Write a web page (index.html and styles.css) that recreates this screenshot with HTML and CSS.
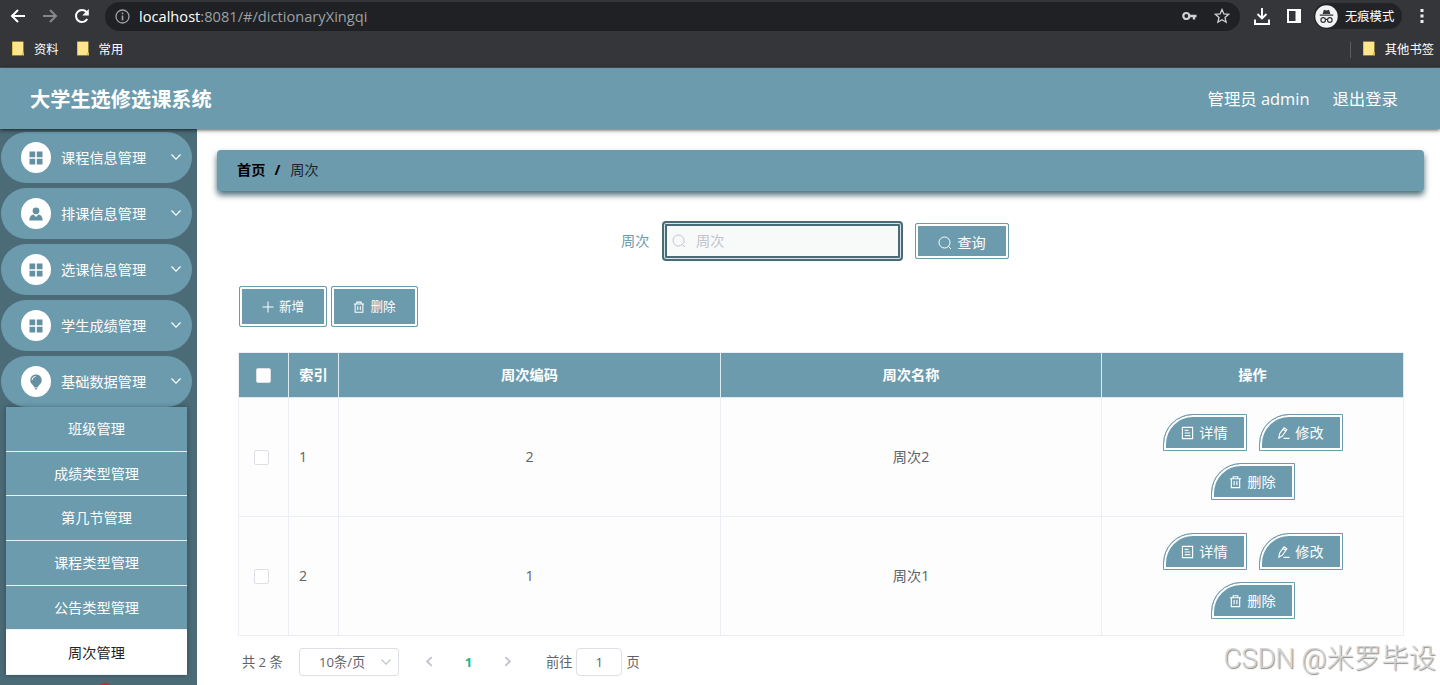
FILE: index.html
```html
<!DOCTYPE html>
<html lang="zh-CN">
<head>
<meta charset="utf-8">
<title>大学生选修选课系统</title>
<link rel="stylesheet" href="styles.css">
</head>
<body>
<svg class="defs" width="0" height="0">
  <symbol id="grid" viewBox="0 0 14 14"><path fill="currentColor" d="M.5.5h5.7v5.7H.5zM7.8.5h5.7v5.7H7.8zM.5 7.8h5.7v5.7H.5zM7.8 7.8h5.7v5.7H7.8z"/></symbol>
  <symbol id="user" viewBox="0 0 14 14"><circle cx="7" cy="3.8" r="3.4" fill="currentColor"/><path fill="currentColor" d="M.3 13.5c0-3.5 1.700-5.500 4.200-5.900L7 10l2.500-2.400c2.500.4 4.200 2.400 4.200 5.900z"/></symbol>
  <symbol id="bulb" viewBox="0 0 14 16"><path fill="currentColor" d="M7 .5a5.700 5.700 0 0 0-3.200 10.400L5.500 13.500h3l1.700-2.600A5.700 5.700 0 0 0 7 .5zM5.600 14.200h2.800L7.700 15.500H6.300z"/><path d="M3 6.200A4 4 0 0 1 6.600 2.400" fill="none" stroke="#fff"/></symbol>
  <symbol id="down" viewBox="0 0 12 12"><path d="M1.500 3.500 6 8.200l4.500-4.700" fill="none" stroke="currentColor" stroke-width="1.200"/></symbol>
  <symbol id="pager" viewBox="0 0 12 12"><path d="M2 4 6 8.200 10 4" fill="none" stroke="currentColor" stroke-width="1.700"/></symbol>
  <symbol id="search" viewBox="0 0 14 14"><circle cx="6.500" cy="6.500" r="5.500" fill="none" stroke="currentColor"/><path d="m10.500 10.500 2.500 2.500" stroke="currentColor"/></symbol>
  <symbol id="plus" viewBox="0 0 12 12"><path d="M6 .5v11M.5 6h11" stroke="currentColor"/></symbol>
  <symbol id="trash" viewBox="0 0 14 14"><path d="M1 3.500h12M2.500 3.500v9.500h9V3.500M4.500 3.500V1.300h5v2.200M5.500 6v4.500M8.500 6v4.500" fill="none" stroke="currentColor" stroke-width="1.200"/></symbol>
  <symbol id="doc" viewBox="0 0 14 14"><path d="M1.500 1h11v12h-11zM4 4.200h4M4 7h6M4 9.800h6" fill="none" stroke="currentColor" stroke-width="1.200"/></symbol>
  <symbol id="edit" viewBox="0 0 14 14"><path d="m2.800 8 4.800-6.600 3 2.100-4.800 6.700L2 12.500zM6.500 3l3 2.100M7 12.800h6.500" fill="none" stroke="currentColor" stroke-width="1.200"/></symbol>
  <symbol id="folder" viewBox="0 0 12 15"><path d="M0 .5h11.500V11l.5 1v2.500H0z" fill="#e2bd48"/><path d="M1 1h10v9.500L9.500 14H1z" fill="#ffe58c"/></symbol>
</svg>

<div class="toolbar">
  <svg class="nav-icon" viewBox="0 0 16 16"><path d="M15 8H2M8 2 2 8l6 6" fill="none" stroke="#fff" stroke-width="2"/></svg>
  <svg class="nav-icon" viewBox="0 0 16 16"><path d="M1 8h13M8 2l6 6-6 6" fill="none" stroke="#86878a" stroke-width="2"/></svg>
  <svg class="nav-icon" viewBox="0 0 16 16"><path d="M13.200 11A6 6 0 1 1 12.500 4" fill="none" stroke="#fff" stroke-width="2"/><path d="M14.800 1v6.500H8.300z" fill="#fff"/></svg>
  <div class="address">
    <svg width="15" height="15" viewBox="0 0 15 15"><circle cx="7.500" cy="7.500" r="6.500" fill="none" stroke="#a0a2a6" stroke-width="1.300"/><path d="M7.500 6.500v5M7.500 3.500v1.700" stroke="#a0a2a6" stroke-width="1.600"/></svg>
    <span class="url"><b>localhost</b>:8081/#/dictionaryXingqi</span>
    <svg class="key" width="15" height="10" viewBox="0 0 15 10"><circle cx="4.300" cy="5" r="3" fill="none" stroke="#d0d1d4" stroke-width="2.200"/><path d="M7 5h7.500M12 5v3.500" stroke="#d0d1d4" stroke-width="2.400"/></svg>
    <svg width="16" height="16" viewBox="0 0 16 16"><path d="m8 1.500 1.900 4.400 4.700.4L11 9.500l1.100 4.700L8 11.700l-4.100 2.500L5 9.500 1.400 6.300l4.700-.4z" fill="none" stroke="#cfd0d3" stroke-width="1.300"/></svg>
  </div>
  <svg class="download" width="16" height="17" viewBox="0 0 16 17"><path d="M8 0v10M3.500 6 8 10.500 12.500 6M1 11.500V16h14v-4.500" fill="none" stroke="#fff" stroke-width="1.900"/></svg>
  <svg class="panel" width="14" height="14" viewBox="0 0 14 14"><path d="M1 1h12v12H1z" fill="none" stroke="#fff" stroke-width="2"/><path d="M8.500 1H13v12H8.500z" fill="#fff"/></svg>
  <div class="incognito">
    <svg width="23" height="23" viewBox="0 0 23 23"><circle cx="11.500" cy="11.500" r="11.200" fill="#f3f3f4"/><path d="m7.600 9 1.300-4.200 2.600.6 2.600-.6L15.400 9zM4.800 9.500h13.400v1.300H4.800z" fill="#35363a"/><g fill="none" stroke="#35363a" stroke-width="1.200"><circle cx="8.200" cy="15" r="2.300"/><circle cx="14.800" cy="15" r="2.300"/><path d="M10.500 14.600q1-.6 2 0"/></g></svg>
    <span>无痕模式</span>
  </div>
  <svg class="dots" width="4" height="14" viewBox="0 0 4 14"><path d="M.5 0h3v3h-3zM.5 5.500h3v3h-3zM.5 11h3v3h-3z" fill="#eee"/></svg>
</div>
<div class="bookmarks">
  <span class="bookmark"><svg><use href="#folder"/></svg>资料</span>
  <span class="bookmark"><svg><use href="#folder"/></svg>常用</span>
  <span class="bookmark others"><svg><use href="#folder"/></svg>其他书签</span>
</div>

<header class="header">
  <h1>大学生选修选课系统</h1>
  <span>管理员 admin</span>
  <span>退出登录</span>
</header>

<div class="body">
  <nav class="sidebar">
    <div class="menu-item"><i><svg><use href="#grid"/></svg></i><span>课程信息管理</span><svg class="arrow"><use href="#down"/></svg></div>
    <div class="menu-item"><i><svg><use href="#user"/></svg></i><span>排课信息管理</span><svg class="arrow"><use href="#down"/></svg></div>
    <div class="menu-item"><i><svg><use href="#grid"/></svg></i><span>选课信息管理</span><svg class="arrow"><use href="#down"/></svg></div>
    <div class="menu-item"><i><svg><use href="#grid"/></svg></i><span>学生成绩管理</span><svg class="arrow"><use href="#down"/></svg></div>
    <div class="menu-item"><i><svg class="bulb"><use href="#bulb"/></svg></i><span>基础数据管理</span><svg class="arrow"><use href="#down"/></svg></div>
    <div class="submenu">
      <a>班级管理</a>
      <a>成绩类型管理</a>
      <a>第几节管理</a>
      <a>课程类型管理</a>
      <a>公告类型管理</a>
      <a class="active">周次管理</a>
    </div>
    <div class="record"></div>
  </nav>

  <main class="main">
    <div class="breadcrumb"><b>首页</b><b class="slash">/</b><span>周次</span></div>
    <div class="search">
      <label>周次</label>
      <div class="input"><svg><use href="#search"/></svg><span>周次</span></div>
      <button class="btn query"><svg><use href="#search"/></svg>查询</button>
    </div>
    <div class="actions">
      <button class="btn add"><svg><use href="#plus"/></svg>新增</button>
      <button class="btn"><svg><use href="#trash"/></svg>删除</button>
    </div>
    <div class="table">
      <div class="row head">
        <div><i class="check"></i></div><div>索引</div><div>周次编码</div><div>周次名称</div><div>操作</div>
      </div>
      <div class="row">
        <div><i class="check"></i></div><div class="index">1</div><div>2</div><div>周次2</div>
        <div class="ops">
          <button class="btn leaf"><svg><use href="#doc"/></svg>详情</button>
          <button class="btn leaf"><svg><use href="#edit"/></svg>修改</button>
          <button class="btn leaf"><svg><use href="#trash"/></svg>删除</button>
        </div>
      </div>
      <div class="row">
        <div><i class="check"></i></div><div class="index">2</div><div>1</div><div>周次1</div>
        <div class="ops">
          <button class="btn leaf"><svg><use href="#doc"/></svg>详情</button>
          <button class="btn leaf"><svg><use href="#edit"/></svg>修改</button>
          <button class="btn leaf"><svg><use href="#trash"/></svg>删除</button>
        </div>
      </div>
    </div>
    <div class="pagination">
      <span class="total">共 2 条</span>
      <span class="size">10条/页<svg><use href="#down"/></svg></span>
      <svg class="prev"><use href="#pager"/></svg>
      <b>1</b>
      <svg class="next"><use href="#pager"/></svg>
      <span class="goto">前往</span><span class="jump">1</span><span>页</span>
    </div>
  </main>
</div>
<div class="watermark">CSDN @米罗毕设</div>
</body>
</html>
```

FILE: styles.css
```css
* { box-sizing: border-box; }
body {
  margin: 0;
  height: 685px;
  overflow: hidden;
  display: flex;
  flex-direction: column;
  position: relative;
  background: #fff;
  font: 14.2px/20px "Open Sans", "Noto Sans CJK SC", sans-serif;
  color: #606266;
}
svg { display: block; flex: none; }
.defs { position: absolute; }

/* browser chrome */
.toolbar {
  flex: none;
  height: 32px;
  background: #35363a;
  display: flex;
  align-items: center;
  padding: 0 16px 0 10px;
}
.nav-icon { width: 16px; height: 16px; margin-right: 16px; }
.address {
  width: 1135px;
  height: 29px;
  margin: 0 14px 0 -1px;
  border-radius: 15px;
  background: #202124;
  display: flex;
  align-items: center;
  padding: 0 10px 0 10px;
}
.url { margin-left: 9px; flex: 1; color: #9aa0a6; font-size: 14.65px; }
.url b { font-weight: 400; color: #fff; }
.key { margin-right: 17px; }
.panel { margin: 0 13px 0 17px; }
.incognito {
  width: 88px;
  height: 26px;
  border-radius: 13px;
  background: #222327;
  display: flex;
  align-items: center;
  gap: 7px;
  padding-left: 1px;
  color: #fff;
  font-size: 12.3px;
  white-space: nowrap;
}
.incognito span { padding-top: 1px; }
.dots { margin-left: auto; }
.bookmarks {
  flex: none;
  height: 36px;
  background: #35363a;
  border-bottom: 1px solid #4a5458;
  display: flex;
  gap: 18px;
  padding: 0 6px 0 12px;
  color: #fff;
  font-size: 12.3px;
}
.bookmark { display: flex; align-items: center; gap: 10px; height: 35px; }
.bookmark svg { width: 12px; height: 15px; margin-top: -2px; }
.others { margin-left: auto; }
.others::before { content: ""; width: 1px; height: 16px; background: #5b5c60; margin-right: 2px; }

/* app header */
.header {
  flex: none;
  height: 61px;
  background: #6c9bae;
  display: flex;
  align-items: center;
  padding: 0 42px 0 30px;
  gap: 23px;
  color: #fff;
  font-size: 16.4px;
  position: relative;
  box-shadow: 0 1px 4px rgba(0, 0, 0, .7);
}
.header h1 { margin: 0 auto 0 0; font-size: 20.2px; font-weight: 700; }

.body { flex: 1; min-height: 0; display: flex; }

/* sidebar */
.sidebar {
  width: 197px;
  flex: none;
  background: #4b6b76;
  padding: 3px 5px 0 1px;
  overflow: hidden;
}
.menu-item {
  height: 51px;
  margin-bottom: 5px;
  border-radius: 26px;
  background: #6c9bae;
  color: #fff;
  display: flex;
  align-items: center;
  padding: 0 10px 0 20px;
}
.menu-item i {
  width: 30px;
  height: 31px;
  margin-right: 10px;
  border-radius: 50%;
  background: #fff;
  color: #6590a2;
  display: flex;
  align-items: center;
  justify-content: center;
}
.menu-item i svg { width: 14px; height: 14px; }
.menu-item i .bulb { height: 16px; }
.menu-item .arrow { width: 12px; height: 12px; margin: -1px 0 0 auto; }
.submenu {
  width: 181px;
  margin: -5px 0 0 5px;
  position: relative;
  box-shadow: 0 0 5px rgba(0, 0, 0, .3);
}
.submenu a {
  display: block;
  height: 44.7px;
  line-height: 44px;
  text-align: center;
  color: #fff;
  background: #6c9bae;
  border-bottom: 1px solid #e9f3f6;
}
.submenu .active { background: #fff; color: #222; line-height: 46px; }
.record { width: 16px; height: 16px; margin: 8px 0 0 96px; border-radius: 50%; background: #b92f36; }

/* content */
.main { flex: 1; padding: 21px 16px 0 20px; }
.breadcrumb {
  height: 41px;
  border-radius: 4px;
  background: #6c9bae;
  box-shadow: 0 4px 6px #4b6b76;
  display: flex;
  align-items: center;
  padding: 0 0 2px 20px;
  color: #222;
}
.breadcrumb b { color: #000; }
.breadcrumb .slash { margin: 0 10px 0 9px; }
.search {
  height: 40px;
  margin: 30px 0 0 404px;
  display: flex;
  align-items: center;
}
.search label { width: 41px; color: #6c9bae; }
.input {
  width: 241px;
  height: 40px;
  border: 2px solid #4b6b76;
  border-radius: 4px;
  background: #f8f9f9;
  box-shadow: inset 0 0 0 1px #d7e5ea, inset 0 0 0 3px #4b6b76;
  display: flex;
  align-items: center;
  gap: 10px;
  padding-left: 8px;
  color: #c0c4cc;
}
.input svg { width: 14px; height: 14px; }
.btn {
  margin: 0;
  border: 1px solid #6c9bae;
  border-radius: 2px;
  box-shadow: inset 0 0 0 2px #fff;
  background: #6c9bae;
  color: #fff;
  font: inherit;
  font-size: 12.6px;
  width: 87px;
  height: 41px;
  display: flex;
  align-items: center;
  justify-content: center;
  gap: 5px;
  padding: 0;
}
.btn svg { width: 12px; height: 12px; }
.add { width: 88px; }
.query { width: 94px; height: 36px; margin-left: 12px; font-size: 14.2px; padding: 4px 0 0 0; }
.query svg { width: 14px; height: 14px; }
.actions { display: flex; gap: 4px; margin: 25px 0 0 22px; }

.table {
  width: 1166px;
  margin: 25px 0 0 21px;
  border: 1px solid #ebeef5;
  border-width: 1px 0 0 1px;
}
.row {
  display: grid;
  grid-template-columns: 50px 50px 382px 381px 302px;
  height: 119px;
  background: #fdfdfe;
}
.row > div {
  border: 1px solid #ebeef5;
  border-width: 0 1px 1px 0;
  display: flex;
  align-items: center;
  justify-content: center;
}
.row .index { justify-content: flex-start; padding-left: 10px; }
.row.head { height: 45px; background: #6c9bae; color: #fff; font-weight: 700; }
.head > div { border-color: #dcebf1; }
.check {
  width: 15px;
  height: 15px;
  border: 1px solid #dcdfe6;
  border-radius: 2px;
  background: #fff;
  margin-right: 4px;
}
.head .check { margin-right: 0; }
.row > .ops {
  flex-wrap: wrap;
  align-content: center;
  gap: 12px;
  padding: 0 50px;
}
.leaf { width: 84px; height: 37px; border-radius: 30px 0 0 0; font-size: 14.2px; }
.leaf svg { width: 13px; height: 14px; }

.pagination {
  display: flex;
  align-items: center;
  margin: 11px 0 0 25px;
  height: 29px;
  font-size: 13.2px;
}
.total { width: 57px; }
.size {
  width: 100px;
  height: 28px;
  border: 1px solid #dcdfe6;
  border-radius: 3px;
  display: flex;
  align-items: center;
  justify-content: space-between;
  padding: 0 6px 0 19px;
}
.size svg { width: 12px; height: 12px; color: #c0c4cc; }
.prev, .next { width: 13px; height: 13px; color: #c0c4cc; }
.prev { transform: rotate(90deg); margin-left: 24px; }
.next { transform: rotate(-90deg); }
.pagination b { width: 65px; text-align: center; color: #18b88c; }
.goto { margin-left: 32px; }
.jump {
  width: 46px;
  height: 28px;
  margin: 0 4px;
  border: 1px solid #dcdfe6;
  border-radius: 4px;
  line-height: 26px;
  text-align: center;
}
.watermark {
  position: absolute;
  right: 4px;
  top: 641px;
  font: 300 27.5px/36px Roboto, "Noto Sans CJK SC", sans-serif;
  letter-spacing: -.1px;
  color: #d4d4d4;
  text-shadow: 1px 1px 1px #8c8c8c;
  white-space: nowrap;
}
```
